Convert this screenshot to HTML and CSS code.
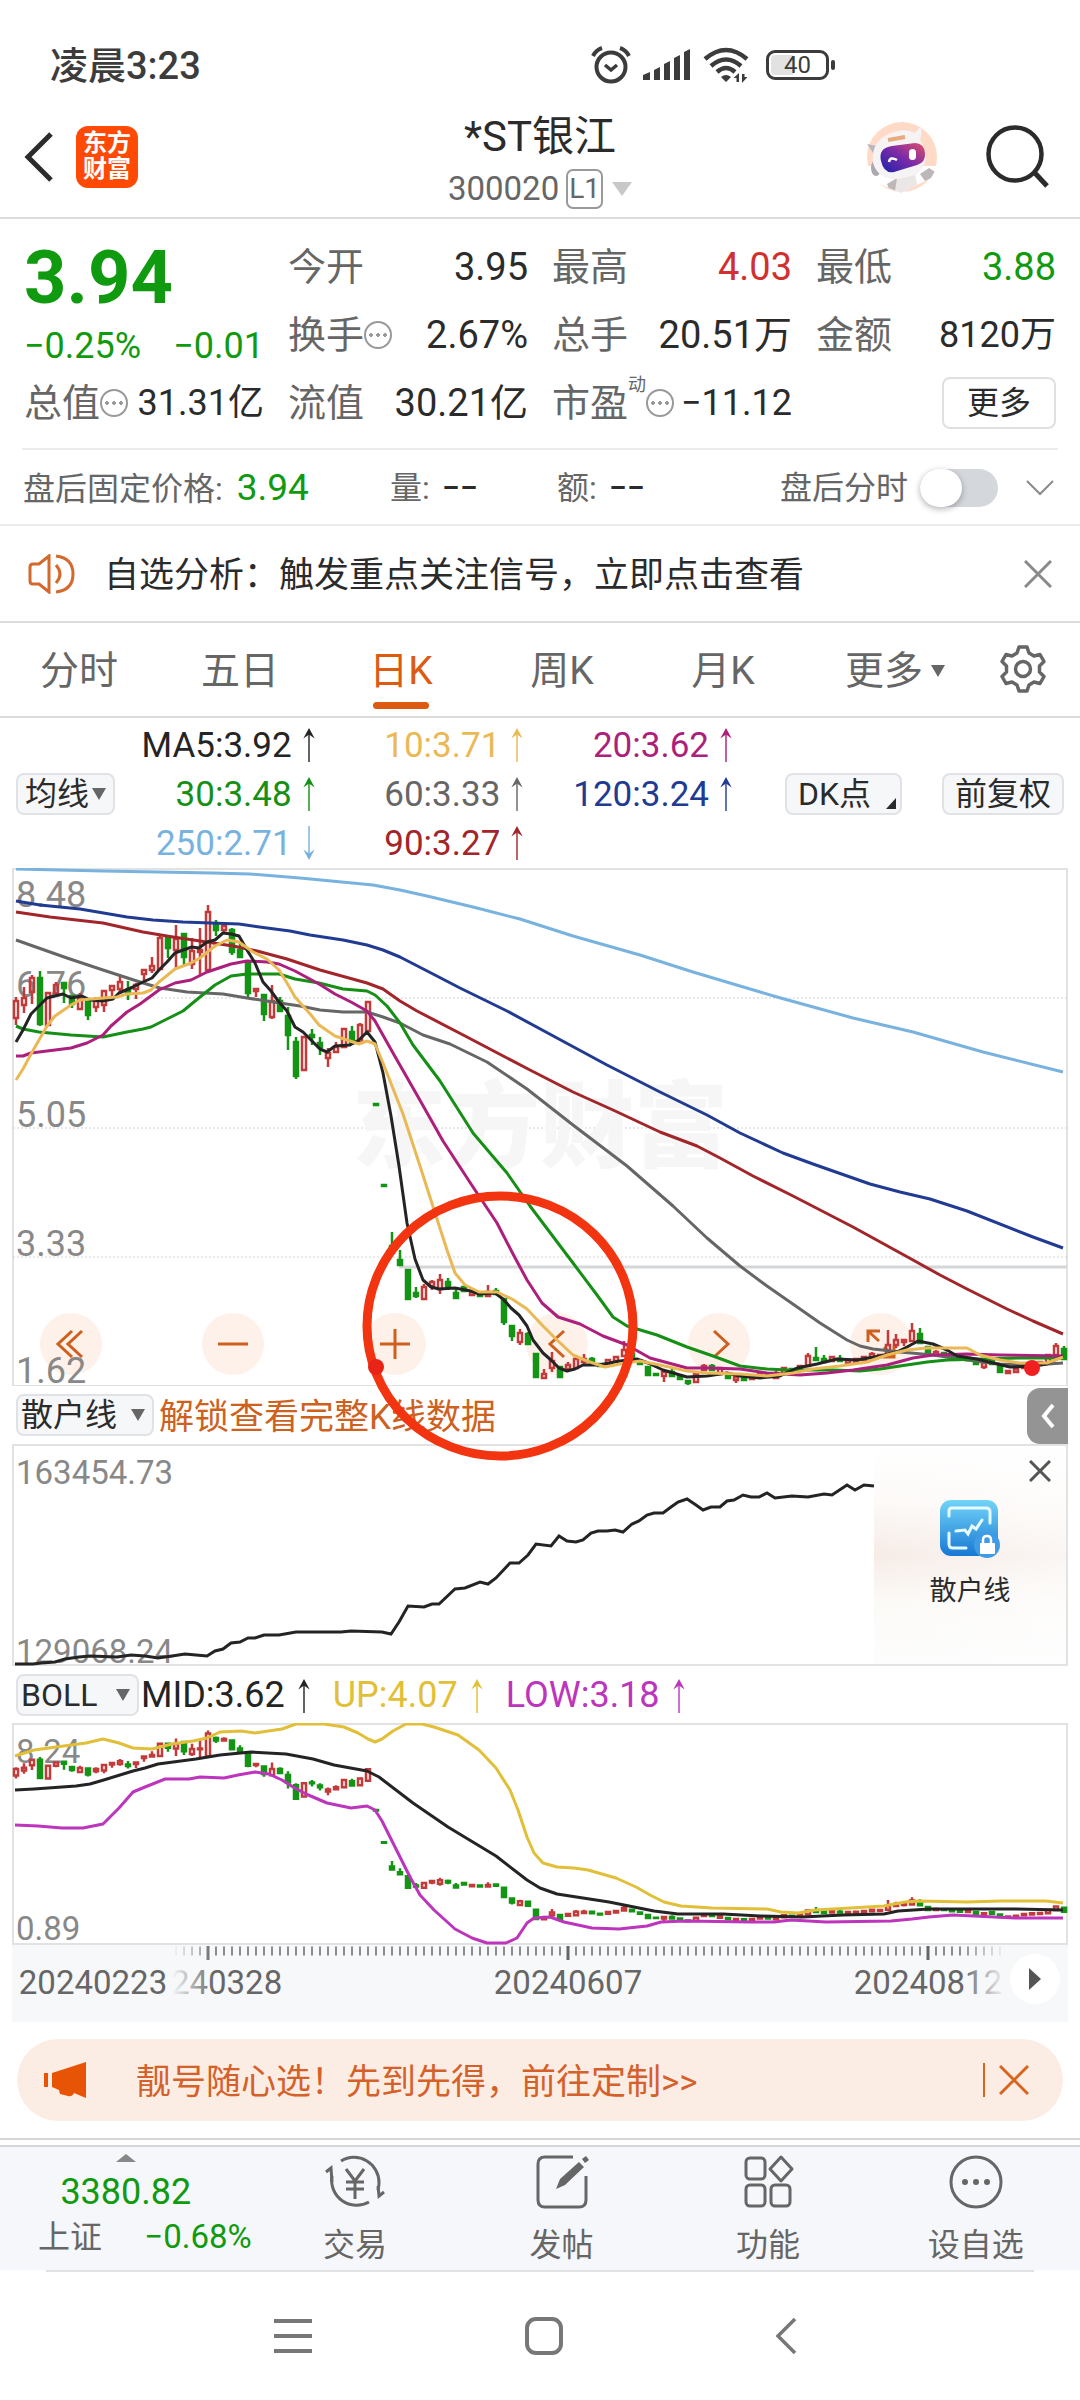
FILE: index.html
```html
<!DOCTYPE html>
<html lang="zh-CN">
<head>
<meta charset="utf-8">
<meta name="viewport" content="width=device-width, initial-scale=1">
<title>*ST银江 300020</title>
<link rel="stylesheet" href="styles.css">
</head>
<body>
<div class="status">
  <span class="status-time">凌晨3:23</span>
  <div class="status-icons">
    <svg width="40" height="38" viewBox="0 0 40 38" fill="none" stroke="#3c3c3c" stroke-width="4"><circle cx="20" cy="21" r="14.500"/><path d="M14 19l6 5 6-5" stroke-width="3.500"/><path d="M2 10q3-6 9-8M38 10q-3-6-9-8"/></svg>
    <svg width="48" height="32" viewBox="0 0 48 32" fill="#3c3c3c"><path d="M0 31v-5l7-3v8zM11 31V21l6-3v13zM21 31V15l6-3v19zM31 31V9l6-3v25zM41 31V3l6-3v31z"/></svg>
    <svg width="48" height="36" viewBox="0 0 48 36"><g fill="none" stroke="#3c3c3c" stroke-width="4.500"><path d="M2 12q21-18 42 0M8 19q15-13 30 0M14 25q9-8 18 0"/></g><path fill="#3c3c3c" d="M18 30q5-4 10 0l-5 5zM36 26v9h-2.500v-4h-3zM39 36v-9h2.500v3h3z"/></svg>
    <span class="battery">40</span>
  </div>
</div>

<header class="header">
  <div class="header-side">
    <button class="icon-btn" aria-label="返回"><svg width="30" height="50" viewBox="0 0 30 50" fill="none" stroke="#2b2b2b" stroke-width="5"><path d="M27 2L4 25l23 23"/></svg></button>
    <a class="logo" href="#">东方<br>财富</a>
  </div>
  <div class="header-mid">
    <h1>*ST银江</h1>
    <div class="code">300020<span class="level">L1</span><span class="tri tri-light"></span></div>
  </div>
  <div class="header-side header-right">
    <a class="icon-btn" href="#" aria-label="助手"><svg width="74" height="74" viewBox="0 0 74 74">
      <defs><linearGradient id="visor" x1="0" y1="1" x2="1" y2="0"><stop offset="0" stop-color="#1b22a8"/><stop offset=".5" stop-color="#7a2aa8"/><stop offset="1" stop-color="#e0506a"/></linearGradient><clipPath id="disc"><path d="M0 0h74v44l-8 14-30 15L10 62 0 44z"/></clipPath></defs>
      <circle cx="37" cy="37" r="35" fill="#ffdac6"/>
      <g clip-path="url(#disc)"><path d="M2 46h72v28H2z" fill="#fff"/><path d="M32 54h18l4 19H28z" fill="#ebe7e6"/><path d="M22 64l10-6-2 13-6-2zM55 54l9-6 8 5-3 6-9 2z" fill="#bdb7b8"/></g>
      <ellipse cx="11" cy="48" rx="5" ry="8" fill="#aaa8b0"/><path d="M2 24l10 2-2 10z" fill="#b9b8bf"/>
      <path d="M8 43Q5 17 33 11q10-2 17 2l6-7q1 8-1 14 13 20-3 34-36 14-44-11z" fill="#f5f3f4"/>
      <path d="M16 41q-3-13 11-15l23-3q9 0 10 10 1 9-8 12l-23 7q-10 2-13-11z" fill="url(#visor)"/>
      <path d="M24 42q1-6 8-2" stroke="#fff" stroke-width="2.500" fill="none"/><rect x="44" y="29" width="7" height="11" rx="3.500" fill="#fff"/><path d="M23 20l17-3" stroke="#e9a97c" stroke-width="4"/>
    </svg></a>
    <button class="icon-btn" aria-label="搜索"><svg width="64" height="64" viewBox="0 0 64 64" fill="none" stroke="#2b2b2b" stroke-width="4.500"><circle cx="30" cy="29" r="26.500"/><path d="M49 47l13 14" stroke-width="5"/></svg></button>
  </div>
</header>

<section class="quote">
  <div class="price-cell">
    <div class="price">3.94</div>
    <div class="change"><span>−0.25%</span><span>−0.01</span></div>
  </div>
  <div class="cell"><span class="k">今开</span><span>3.95</span></div>
  <div class="cell"><span class="k">最高</span><span class="up">4.03</span></div>
  <div class="cell"><span class="k">最低</span><span class="down">3.88</span></div>
  <div class="cell"><span class="k">换手<i class="more"></i></span><span>2.67%</span></div>
  <div class="cell"><span class="k">总手</span><span>20.51万</span></div>
  <div class="cell"><span class="k">金额</span><span class="long">8120万</span></div>
  <div class="cell"><span class="k">总值<i class="more"></i></span><span class="long">31.31亿</span></div>
  <div class="cell"><span class="k">流值</span><span>30.21亿</span></div>
  <div class="cell"><span class="k">市盈<small>动</small><i class="more"></i></span><span class="long">−11.12</span></div>
  <div class="cell cell-end"><button class="more-btn">更多</button></div>
</section>

<section class="after">
  <div class="after-price">盘后固定价格: <b>3.94</b></div>
  <div class="after-vol">量: <span class="dash">−−</span></div>
  <div class="after-amt">额: <span class="dash">−−</span></div>
  <label class="after-switch">盘后分时<input type="checkbox" class="switch"></label>
  <button class="icon-btn" aria-label="展开"><svg width="28" height="16" viewBox="0 0 28 16" fill="none" stroke="#8a8a8a" stroke-width="2"><path d="M1 1l13 13L27 1"/></svg></button>
</section>

<section class="notice">
  <svg width="48" height="40" viewBox="0 0 48 40" fill="none" stroke="#d4692e" stroke-width="3"><path d="M21 2L11 10H5q-3 0-3 3v14q0 3 3 3h6l10 8z"/><path d="M28 11q8 9 0 18M28 2q17 2 17 18T28 38"/></svg>
  <a href="#">自选分析：触发重点关注信号，立即点击查看</a>
  <button class="icon-btn" aria-label="关闭"><svg width="28" height="28" viewBox="0 0 28 28" fill="none" stroke="#8a8a8a" stroke-width="3"><path d="M1 1l26 26M27 1L1 27"/></svg></button>
</section>

<nav class="tabs">
  <button>分时</button><button>五日</button><button class="on">日K</button><button>周K</button><button>月K</button>
  <button class="tab-more">更多<span class="tri tri-small"></span></button>
  <button class="tab-gear" aria-label="设置"><svg width="48" height="48" viewBox="0 0 48 48" fill="none" stroke="#666" stroke-width="3.500" stroke-linejoin="round"><path d="M20 2h8l2 6 5 3 6-1.500 4 7-4.500 4.500v6l4.500 4.500-4 7-6-1.500-5 3-2 6h-8l-2-6-5-3-6 1.500-4-7L7.500 27v-6L3 16.500l4-7L13 11l5-3z"/><circle cx="24" cy="24" r="7.500"/></svg></button>
</nav>

<section class="ma">
  <div class="select-wrap ma-select"><select aria-label="指标"><option>均线</option></select><span class="tri tri-small"></span></div>
  <div class="ma-grid">
    <span class="c5">MA5:3.92<svg class="arw"><use href="#arrow"/></svg></span><span class="c10">10:3.71<svg class="arw"><use href="#arrow"/></svg></span><span class="c20">20:3.62<svg class="arw"><use href="#arrow"/></svg></span>
    <span class="c30">30:3.48<svg class="arw"><use href="#arrow"/></svg></span><span class="c60">60:3.33<svg class="arw"><use href="#arrow"/></svg></span><span class="c120">120:3.24<svg class="arw"><use href="#arrow"/></svg></span>
    <span class="c250">250:2.71<svg class="arw flip"><use href="#arrow"/></svg></span><span class="c90">90:3.27<svg class="arw"><use href="#arrow"/></svg></span>
  </div>
  <button class="chip chip-dk">DK点<i class="corner"></i></button>
  <button class="chip">前复权</button>
</section>
<svg class="defs" width="0" height="0"><symbol id="arrow" viewBox="0 0 14 36"><path d="M7 36V2" stroke="currentColor" stroke-width="1.500" fill="none"/><path d="M7 0l6 11-6-4-6 4z" fill="currentColor"/></symbol></svg>

<main class="charts">
  <div class="kline">
    <svg class="plot" viewBox="0 0 1056 518" role="img" aria-label="日K线图">
      <rect x="1" y="1" width="1054" height="517" class="frame"/>
      <path d="M1 130H1055M1 260H1055M1 389H1055" class="grid"/>
      <text x="528" y="292" class="watermark">东方财富</text>
      <path d="M387 399H1055" stroke="#d4d6d8" stroke-width="3"/>
      <g class="axis axis-big"><text x="4" y="39">8.48</text><text x="4" y="129">6.76</text><text x="4" y="259">5.05</text><text x="4" y="388">3.33</text><text x="4" y="515">1.62</text></g>
      <g id="k-main"></g>
      <g class="line">
        <polyline class="c250" points="4,1 91,3 201,5 238,6 288,10 361,17 388,22 415,28 461,39 508,51 561,68 628,87 681,104 728,118 765,129 841,150 901,164 971,184 1051,204"/>
        <polyline class="c120" points="4,33 28,37 68,41 115,49 141,52 171,54 227,56 255,60 278,63 298,67 331,72 355,77 371,82 388,89 421,106 448,120 495,143 545,170 595,197 648,224 695,247 728,265 771,285 801,296 858,316 888,324 918,331 955,343 1021,369 1051,380"/>
        <polyline class="c90" points="4,44 38,49 91,55 131,64 161,69 188,73 221,78 245,83 275,91 308,102 355,115 371,121 388,133 405,143 455,169 495,190 518,202 561,224 601,242 648,264 685,278 708,290 741,308 781,328 841,359 901,392 928,407 955,421 995,441 1021,453 1051,466"/>
        <polyline class="c60" points="4,72 55,90 91,102 131,115 148,120 175,124 211,126 235,130 261,134 288,138 308,142 331,144 355,144 371,149 388,155 411,167 438,176 475,194 515,221 561,257 615,298 661,338 695,370 728,398 755,418 788,441 808,455 835,472 848,478 861,481 888,484 921,487 955,492 988,496 1021,497 1051,495"/>
        <polyline class="c30" points="4,158 11,161 27,164 59,167 91,169 115,164 131,161 139,159 155,151 171,143 188,129 203,117 219,108 235,106 267,106 283,111 307,115 331,121 355,123 363,127 375,138 388,155 401,177 428,213 461,265 495,305 518,338 561,395 585,427 601,449 615,458 645,467 675,479 701,488 728,498 755,501 775,502 821,502 848,503 868,501 888,498 915,494 935,492 971,491 1008,490 1051,490"/>
        <polyline class="c20" points="4,188 11,188 19,185 43,182 59,180 75,175 91,167 99,158 115,144 128,136 147,122 163,115 179,112 195,104 219,96 235,93 255,94 267,96 283,103 307,116 323,126 339,134 355,143 363,153 381,185 405,227 431,273 461,319 485,355 501,386 515,412 530,435 546,449 568,456 591,468 615,477 638,490 675,500 698,500 728,501 755,505 788,507 815,505 841,502 875,497 901,490 921,487 955,486 988,487 1051,488"/>
        <polyline class="c5" points="4,174 11,162 19,146 27,138 35,130 51,126 59,130 70,128 78,132 91,133 101,131 107,125 121,119 131,114 140,110 147,102 155,94 163,85 171,82 180,79 187,80 195,74 203,72 211,65 219,66 227,68 235,82 243,95 251,114 259,123 267,134 275,143 283,159 291,164 299,172 308,181 315,184 323,178 338,177 347,172 355,164 363,174 371,205 379,248 387,298 395,355 403,391 411,412 419,419 427,421 443,420 459,423 467,426 483,425 491,431 499,440 507,447 515,458 521,472 531,485 539,492 547,500 555,503 563,501 571,497 587,497 608,493 625,491 636,495 651,502 675,509 695,508 715,505 728,508 748,510 768,508 785,500 805,496 825,491 845,492 868,488 885,484 895,479 906,473 921,476 935,482 945,488 965,491 981,495 998,499 1021,498 1035,496 1051,488"/>
        <polyline class="c10" points="4,212 11,201 19,186 27,172 35,158 43,148 59,137 68,132 91,130 105,129 115,126 131,125 139,122 147,114 163,101 179,95 188,90 203,78 215,72 227,74 241,84 255,91 267,102 275,115 283,129 299,147 307,157 323,168 347,176 355,173 363,176 371,195 391,246 408,298 425,351 435,382 443,405 453,417 467,424 485,424 500,431 515,441 531,458 545,472 561,487 575,493 593,499 608,496 628,493 648,497 675,503 695,505 728,506 755,508 781,505 801,501 828,498 855,494 875,487 895,482 915,480 955,480 968,487 988,492 1008,495 1035,495 1051,489"/>
      </g>
    </svg>
    <div class="controls">
      <button aria-label="最左"><svg viewBox="0 0 62 62"><path d="M32 18L18 31l14 13M42 18L28 31l14 13"/></svg></button>
      <button aria-label="缩小"><svg viewBox="0 0 62 62"><path d="M16 31h30"/></svg></button>
      <button aria-label="放大"><svg viewBox="0 0 62 62"><path d="M16 31h30M31 16v30"/></svg></button>
      <button aria-label="左移"><svg viewBox="0 0 62 62"><path d="M38 18L24 31l14 13"/></svg></button>
      <button aria-label="右移"><svg viewBox="0 0 62 62"><path d="M26 18l14 13-14 13"/></svg></button>
      <button aria-label="全屏"><svg viewBox="0 0 62 62"><path d="M18 29V18h12M18 18l11 10M44 33v11H33M44 44L34 34"/></svg></button>
    </div>
    <svg class="marks" viewBox="0 0 1056 518"><ellipse cx="488" cy="458" rx="133" ry="130" fill="none" stroke="#f23410" stroke-width="9"/><circle cx="364" cy="499" r="8" fill="#e82418"/><circle cx="1020" cy="500" r="8" fill="#f02020"/></svg>
  </div>

  <div class="bar">
    <div class="select-wrap"><select class="sel-sanhu" aria-label="副图一"><option>散户线</option></select><span class="tri tri-small"></span></div>
    <a class="unlock" href="#">解锁查看完整K线数据</a>
    <button class="drawer" aria-label="展开侧栏"><svg width="14" height="26" viewBox="0 0 14 26" fill="none" stroke="#fff" stroke-width="4"><path d="M12 2L3 13l9 11"/></svg></button>
  </div>

  <div class="sub">
    <svg class="plot" viewBox="0 0 1056 222" role="img" aria-label="散户线走势">
      <rect x="1" y="1" width="1054" height="220" class="frame"/>
      <g class="axis"><text x="4" y="40">163454.73</text><text x="4" y="219">129068.24</text></g>
      <polyline class="trend" points="3,220 21,220 29,219 43,218 53,215 67,213 78,212 105,213 119,211 133,212 146,214 160,212 173,210 184,211 195,212 203,207 211,205 219,199 228,198 236,194 243,194 252,191 267,191 284,188 329,188 339,187 370,188 379,190 387,178 396,162 412,163 420,160 427,160 443,145 453,144 468,138 476,140 484,134 498,119 507,119 516,111 524,100 539,102 547,92 555,97 564,98 571,96 579,89 586,87 595,87 603,86 611,88 620,80 627,77 635,71 642,69 651,69 659,63 666,58 675,55 684,61 691,66 699,63 708,63 715,57 722,56 731,51 739,53 747,53 755,49 763,54 780,52 796,53 812,50 820,51 835,41 843,46 852,41 862,42"/>
    </svg>
    <aside class="promo">
      <button class="icon-btn promo-close" aria-label="关闭"><svg width="22" height="22" viewBox="0 0 22 22" fill="none" stroke="#555" stroke-width="3"><path d="M1 1l20 20M21 1L1 21"/></svg></button>
      <a href="#"><svg width="62" height="60" viewBox="0 0 62 60" fill="none"><defs><linearGradient id="tile" x1="0" y1="0" x2="0" y2="1"><stop offset="0" stop-color="#72d4f8"/><stop offset="1" stop-color="#1878d4"/></linearGradient></defs><rect x="1" y="1" width="58" height="56" rx="11" fill="url(#tile)"/><g stroke="#e6faff" stroke-width="3" stroke-linecap="round"><path d="M10 17v-5q0-3 3-3h34q4 0 4 4v11M10 34v11q0 4 4 4h13"/><path d="M17 32l9-1 3 4 4-8 4 3 6-9"/></g><circle cx="48" cy="46" r="13" fill="#3f9be6"/><rect x="41" y="44" width="15" height="11" rx="1" fill="#fff"/><path d="M44 44v-3q0-4 4-4t4 4v3" stroke="#fff" stroke-width="2.500"/></svg><span>散户线</span></a>
    </aside>
  </div>

  <div class="bar bar-boll">
    <div class="select-wrap"><select class="sel-boll" aria-label="副图二"><option>BOLL</option></select><span class="tri tri-small"></span></div>
    <span class="boll c5">MID:3.62<svg class="arw"><use href="#arrow"/></svg></span><span class="boll cup">UP:4.07<svg class="arw"><use href="#arrow"/></svg></span><span class="boll clow">LOW:3.18<svg class="arw"><use href="#arrow"/></svg></span>
  </div>

  <svg class="plot" viewBox="0 0 1056 222" role="img" aria-label="BOLL">
    <rect x="1" y="1" width="1054" height="220" class="frame"/>
    <g class="axis"><text x="4" y="40">8.24</text><text x="4" y="217">0.89</text></g>
    <g id="k-boll"></g>
    <g class="line">
      <polyline class="cup" points="3,33 22,27 74,20 91,16 107,20 121,25 140,26 160,21 181,18 195,15 208,9 229,8 243,10 270,6 284,1 312,1 332,4 346,10 356,16 363,19 370,16 381,8 394,1 410,1 422,4 446,12 467,27 484,45 498,67 506,87 515,114 522,130 531,140 545,144 562,145 576,147 590,151 604,155 624,164 638,172 652,179 669,183 700,185 755,186 769,189 786,190 803,187 838,185 872,183 893,179 907,178 955,179 989,178 1034,178 1051,180"/>
      <polyline class="c5" points="3,67 22,66 64,63 78,61 95,56 121,48 133,45 146,41 184,36 208,32 239,29 274,31 301,36 322,42 355,48 367,54 401,80 436,104 484,133 515,157 528,165 545,171 597,179 642,188 666,191 711,191 748,193 790,194 831,192 872,191 886,188 917,186 1003,186 1051,187"/>
      <polyline class="clow" points="3,102 26,103 50,105 71,105 91,101 107,85 121,69 133,64 153,56 177,56 188,54 212,55 226,52 243,49 257,51 270,57 281,64 294,71 315,80 339,85 355,83 363,87 370,98 381,120 398,154 408,172 422,187 443,206 460,215 475,220 494,220 505,215 515,200 522,195 538,194 552,199 580,205 607,206 635,203 649,199 673,198 738,199 762,199 779,197 814,199 879,198 900,196 917,194 941,192 962,193 1003,195 1051,195"/>
    </g>
  </svg>

  <div class="ruler">
    <svg class="plot" viewBox="0 0 1056 77">
      <defs><linearGradient id="fade-l"><stop offset="0" stop-color="#f7f8fa"/><stop offset="1" stop-color="#f7f8fa" stop-opacity="0"/></linearGradient><linearGradient id="fade-r"><stop offset="0" stop-color="#f7f8fa" stop-opacity="0"/><stop offset="1" stop-color="#f7f8fa"/></linearGradient></defs>
      <path d="M163 6H1000" stroke="#8c8c8c" stroke-width="9" stroke-dasharray="2 6"/>
      <path d="M196 1v14M556 1v14M916 1v14" stroke="#666" stroke-width="3"/>
      <g class="dates"><text x="196" y="49">20240328</text><text x="556" y="49">20240607</text><text x="916" y="49">20240812</text></g>
      <path d="M2 0h158v77H2zM994 0h61v77h-61z" fill="#f7f8fa"/><path d="M160 0h42v77h-42z" fill="url(#fade-l)"/><path d="M950 0h44v77h-44z" fill="url(#fade-r)"/>
      <g class="dates"><text x="81" y="49">20240223</text></g>
    </svg>
    <button class="play" aria-label="播放"><svg width="14" height="22" viewBox="0 0 14 22"><path d="M1 0l12 11L1 22z" fill="#555"/></svg></button>
  </div>
</main>

<div class="banner">
  <svg width="44" height="38" viewBox="0 0 44 38" fill="#e85406"><path d="M0 12h4v14H0zM8 12L42 1v36L30 32q-2 4-6 3l-8-2-1-4-7-3z"/></svg>
  <a href="#">靓号随心选！先到先得，前往定制&gt;&gt;</a>
  <button class="icon-btn banner-close" aria-label="关闭"><svg width="30" height="30" viewBox="0 0 30 30" fill="none" stroke="#d9641e" stroke-width="3"><path d="M1 1l28 28M29 1L1 29"/></svg></button>
</div>

<nav class="bottom">
  <a class="index" href="#"><span class="tri tri-up"></span><span class="index-val">3380.82</span><span class="index-row"><span>上证</span><span class="down">−0.68%</span></span></a>
  <a class="item" href="#"><svg viewBox="0 0 60 56"><path d="M16 7a25 25 0 0 1 38 22q0 3-1 7M44 48A25 25 0 0 1 7 22"/><path d="M1 18l5-4 1 14M59 38l-5 4-1-10" /><path d="M21 15l9 12 9-12M30 27v18M21 28h18M21 35h18"/></svg>交易</a>
  <a class="item" href="#"><svg viewBox="0 0 60 56"><path d="M41 3H13q-7 0-7 7v36q0 7 7 7h34q7 0 7-7V22"/><path d="M24 35l4-10L47 8l5 5-19 18zM50 5l4-3 3 4-4 3z" fill="#666" stroke="none"/></svg>发帖</a>
  <a class="item" href="#"><svg viewBox="0 0 60 56"><rect x="8" y="4" width="19" height="21" rx="4"/><rect x="8" y="31" width="19" height="21" rx="4"/><rect x="33" y="31" width="19" height="21" rx="4"/><path d="M43 3l11 12-11 12-11-12z" stroke-linejoin="round"/></svg>功能</a>
  <a class="item" href="#"><svg viewBox="0 0 60 56"><circle cx="30" cy="28" r="25"/><g fill="#666" stroke="none"><circle cx="19" cy="28" r="3"/><circle cx="30" cy="28" r="3"/><circle cx="41" cy="28" r="3"/></g></svg>设自选</a>
</nav>

<div class="sysnav">
  <button class="icon-btn" aria-label="菜单"><svg width="38" height="34" viewBox="0 0 38 34" stroke="#777" stroke-width="4"><path d="M0 2h38M0 17h38M0 32h38"/></svg></button>
  <button class="icon-btn" aria-label="主页"><svg width="38" height="38" viewBox="0 0 38 38" fill="none" stroke="#777" stroke-width="4"><rect x="2" y="2" width="34" height="34" rx="9"/></svg></button>
  <button class="icon-btn" aria-label="返回"><svg width="28" height="36" viewBox="0 0 28 36" fill="none" stroke="#777" stroke-width="3.500"><path d="M19 1L2 18l17 17"/></svg></button>
</div>
<script src="script.js"></script>
</body>
</html>
```
FILE: styles.css
```css
* { box-sizing: border-box; }
body { margin: 0; background: #fff; color: #2b2b2b; font-family: Roboto, "Noto Sans CJK SC", sans-serif; font-size: 34px; line-height: 1.2; }
button, select { font: inherit; color: inherit; background: none; border: 0; padding: 0; margin: 0; }
a { color: inherit; text-decoration: none; }
svg { display: block; flex: none; }
.icon-btn { display: flex; align-items: center; justify-content: center; }
.defs { position: absolute; }
.up { color: #d03030; }
.down { color: #0f9a0f; }

.tri { display: inline-block; border: 10px solid transparent; border-top: 14px solid #c8c8c8; border-bottom: 0; }
.tri-small { border-width: 12px 7px 0; border-top-color: #666; }
.tri-up { border-width: 0 10px 8px; border-bottom: 8px solid #888; }

.status { display: flex; align-items: center; justify-content: space-between; height: 108px; padding: 22px 245px 0 50px; }
.status-time { padding-top: 4px; font-size: 38px; font-weight: 500; color: #3c3c3c; }
.status-icons { display: flex; align-items: center; gap: 12px; }
.battery { position: relative; width: 63px; height: 30px; margin: 0 6px 0 3px; padding: 2px; border: 3px solid #3c3c3c; border-radius: 9px; font-size: 24px; line-height: 21px; text-align: center; color: #3c3c3c; background: linear-gradient(90deg, #e2e2e2 22px, #fff 22px) content-box; }
.battery::after { content: ""; position: absolute; right: -9px; top: 7px; width: 4px; height: 10px; border-radius: 2px; background: #3c3c3c; }

.header { display: grid; grid-template-columns: 1fr auto 1fr; height: 111px; border-bottom: 2px solid #dcdcdc; }
.header-side { display: flex; align-items: center; gap: 22px; padding: 0 0 12px 24px; }
.header-right { justify-content: flex-end; gap: 46px; padding: 0 31px 12px 0; }
.logo { width: 62px; height: 62px; border-radius: 12px; background: #ff4a06; color: #fff; font-size: 24px; line-height: 26px; font-weight: 700; text-align: center; padding-top: 4px; }
.header-mid { text-align: center; padding-top: 4px; }
h1 { margin: 0; font-size: 42px; line-height: 50px; font-weight: 400; }
.code { display: flex; align-items: center; justify-content: center; margin-top: 7px; font-size: 33px; line-height: 38px; color: #666; }
.level { border: 2px solid #999; border-radius: 7px; padding: 0 1px; margin: 0 9px 0 7px; font-size: 28px; line-height: 36px; }

.quote { display: grid; grid-template-columns: repeat(4, 1fr); grid-auto-rows: 68px; column-gap: 24px; margin: 0 22px; padding: 14px 2px 11px; border-bottom: 2px solid #ececec; font-size: 38px; line-height: 68px; }
.price-cell { grid-row: span 2; color: #0f9a0f; }
.price { font-size: 74px; line-height: 90px; font-weight: 700; }
.change { display: flex; justify-content: space-between; font-size: 36px; line-height: 46px; }
.cell { display: flex; justify-content: space-between; white-space: nowrap; }
.long { font-size: 36px; }
.k { display: flex; align-items: center; color: #666; }
.k small { align-self: flex-start; font-size: 18px; line-height: 32px; }
.more { width: 28px; height: 28px; border: 2px solid #999; border-radius: 50%; background: radial-gradient(circle, #999 2px, transparent 2px), radial-gradient(circle at 5px 12px, #999 2px, transparent 2px), radial-gradient(circle at 19px 12px, #999 2px, transparent 2px); }
.cell-end { justify-content: flex-end; align-items: center; }
.more-btn { width: 114px; height: 52px; border: 2px solid #e0e0e0; border-radius: 8px; font-size: 32px; line-height: 48px; }

.after { display: flex; align-items: center; height: 76px; padding: 2px 26px 0 23px; border-bottom: 2px solid #ececec; font-size: 32px; color: #666; }
.after b { padding-left: 6px; font-size: 37px; font-weight: 400; color: #0f9a0f; }
.after-price { flex: 367; white-space: nowrap; }
.after-vol { flex: 167; white-space: nowrap; }
.after-amt { flex: 223; white-space: nowrap; }
.dash { color: #2b2b2b; padding-left: 4px; font-weight: 500; }
.after-switch { display: flex; align-items: center; gap: 12px; margin-right: 28px; }
.switch { appearance: none; width: 78px; height: 38px; margin: 0; border-radius: 19px; background: #d4d8dd; }
.switch::before { content: ""; display: block; width: 42px; height: 38px; border-radius: 20px; background: #fff; box-shadow: 0 2px 6px rgba(0, 0, 0, .3); }

.notice { display: flex; align-items: center; height: 97px; padding: 0 28px; border-bottom: 2px solid #dcdcdc; font-size: 35px; }
.notice a { flex: 1; padding: 5px 0 0 28px; }

.tabs { display: grid; grid-template-columns: repeat(5, 161fr) 165fr 110fr; height: 95px; border-bottom: 2px solid #dcdcdc; font-size: 39px; color: #666; }
.tabs button { position: relative; display: flex; align-items: center; justify-content: center; padding: 3px 3px 0 0; }
.tabs .on { color: #dd5a12; }
.tabs .on::after { content: ""; position: absolute; bottom: 7px; width: 56px; height: 7px; border-radius: 4px; background: #dd5a12; }
.tabs .tab-more { gap: 8px; padding-left: 18px; }
.tabs .tab-gear { padding: 0 4px 2px 0; }

.ma { display: flex; align-items: center; height: 150px; padding: 2px 16px 0; }
.select-wrap { display: flex; align-items: center; position: relative; }
.select-wrap .tri { position: absolute; right: 9px; pointer-events: none; }
select, .chip { appearance: none; height: 42px; border: 2px solid #e0e2e6; border-radius: 8px; background: #f6f7f9; font-size: 32px; line-height: 36px; }
.ma-select select { width: 99px; padding-left: 7px; }
.ma-grid { flex: 1; display: grid; grid-template-columns: 201fr 209fr 209fr; grid-auto-rows: 49px; margin-right: 52px; font-size: 35px; line-height: 49px; }
.ma-grid span { display: flex; justify-content: flex-end; align-items: center; }
.ma-grid .arw { margin-left: 10px; }
.arw { width: 14px; height: 34px; }
.flip { transform: rotate(180deg); }
.chip { position: relative; padding: 0 11px; margin-left: 40px; }
.chip-dk { width: 117px; margin-left: 0; text-align: left; }
.corner { position: absolute; right: 4px; bottom: 4px; border-left: 10px solid transparent; border-bottom: 11px solid #2b2b2b; }

.c5 { color: #242424; } .c10 { color: #eab955; } .c20 { color: #ac1f7c; } .c30 { color: #158f15; } .c60 { color: #666; }
.c120 { color: #213a92; } .c250 { color: #78b2de; } .c90 { color: #a2252a; } .cup { color: #e2bf38; } .clow { color: #bc35bc; }

.charts { padding: 0 12px; }
.plot { width: 100%; height: auto; }
.frame { fill: none; stroke: #e2e2e2; stroke-width: 2; }
.grid { stroke: #d2d2d2; stroke-width: 1; stroke-dasharray: 2 2; }
.watermark { font-size: 94px; font-weight: 900; fill: #f6f6f6; text-anchor: middle; }
.axis { font-size: 33px; fill: #888; }
.axis-big { font-size: 36px; }
.line polyline { fill: none; stroke: currentColor; stroke-width: 3; stroke-linejoin: round; }
.trend { fill: none; stroke: #242424; stroke-width: 3; }
.k-up { fill: none; stroke: #c23a3a; stroke-width: 2.5; }
.k-down { fill: #149414; stroke: #149414; stroke-width: 2.5; }

.kline, .sub, .ruler { position: relative; }
.kline .plot { position: relative; z-index: 1; pointer-events: none; }
.controls { position: absolute; left: 28px; right: 156px; bottom: 11px; display: flex; justify-content: space-between; }
.controls button { width: 62px; height: 62px; border-radius: 50%; background: #fef1ea; }
.controls path { fill: none; stroke: #cf5f1c; stroke-width: 3; }
.marks { position: absolute; left: 0; top: 0; width: 100%; overflow: visible; z-index: 2; pointer-events: none; }

.bar { display: flex; align-items: center; height: 58px; padding-left: 4px; }
.sel-sanhu { width: 138px; padding-left: 3px; }
.sel-boll { width: 123px; padding-left: 3px; }
.unlock { flex: 1; padding: 5px 0 0 5px; font-size: 35px; color: #cd621f; }
.drawer { align-self: stretch; width: 41px; margin-top: 2px; border-radius: 13px 0 0 13px; background: #949494; display: flex; align-items: center; justify-content: center; }
.bar-boll { height: 57px; }
.boll { display: flex; align-items: center; padding: 3px 20px 0 2px; font-size: 36px; }
.boll .arw { margin-left: 12px; }

.promo { position: absolute; right: 2px; top: 2px; bottom: 2px; width: 192px; background: linear-gradient(90deg, transparent, rgba(255, 255, 255, .5)), linear-gradient(#fff, #fdfaf8 25%, #f6ece7 50%, #fcfaf7 72%, #fdfdfd); }
.promo a { display: flex; flex-direction: column; align-items: center; gap: 14px; padding-top: 53px; font-size: 27px; line-height: 36px; }
.promo-close { position: absolute; right: 15px; top: 14px; }

.ruler { background: #f7f8fa; }
.dates { font-size: 33px; fill: #666; text-anchor: middle; }
.play { position: absolute; right: 8px; top: 9px; width: 50px; height: 50px; border-radius: 50%; background: #fff; display: flex; align-items: center; justify-content: center; }

.banner { display: flex; align-items: center; height: 82px; margin: 17px; padding: 0 34px 0 27px; border-radius: 41px; background: #fcede4; color: #d4602a; font-size: 35px; }
.banner a { flex: 1; padding: 5px 0 0 48px; }
.banner-close { height: 34px; padding-left: 14px; border-left: 2px solid #d9641e; }

.bottom { display: grid; grid-template-columns: 251fr 206fr 206fr 206fr 208fr; height: 132px; border-top: 2px solid #d4d6d8; background: linear-gradient(#fff 5px, #d4d6d8 5px, #d4d6d8 7px, #f6f7fa 7px); padding-top: 5px; font-size: 32px; color: #666; }
.index { display: flex; flex-direction: column; align-items: center; padding-top: 9px; }
.index-val { font-size: 36px; line-height: 46px; margin-top: 7px; color: #0f9a0f; }
.index-row { align-self: stretch; display: flex; justify-content: space-between; padding: 0 0 0 38px; line-height: 44px; }
.index-row .down { font-size: 33px; }
.item { display: flex; flex-direction: column; align-items: center; gap: 15px; padding-top: 9px; line-height: 40px; }
.item svg { width: 60px; height: 56px; fill: none; stroke: #666; stroke-width: 3; }

.sysnav { display: flex; justify-content: space-between; align-items: center; height: 130px; margin: 0 46px; padding: 0 230px 0 228px; border-top: 2px solid #e2e2e2; }
```
FILE: script.js
```js
// Each entry: direction (r = up day, g = down day), then high, body top, body bottom, low in main-chart units.
const days = `r129,133,150,157 r119,130,137,145 r107,110,124,136 g103,110,156,158 r125,125,157,157 r114,117,125,129
g114,115,120,135 g127,128,136,140 r125,131,141,141 g132,132,147,152 r129,133,139,144 r123,123,137,144
r117,118,122,130 r108,114,121,125 g113,122,126,132 r115,117,121,131 r101,102,106,115 r89,98,102,105
r68,70,101,102 g69,70,80,90 r57,71,82,101 g65,66,89,98 r70,83,96,101 r60,82,84,108
r37,44,102,104 g52,56,62,68 r54,58,62,65 g60,62,84,87 g74,82,89,90 g94,94,125,129
r120,121,123,129 g127,127,146,153 r117,133,149,151 g129,133,143,143 g139,148,167,182 g169,174,208,211
r169,169,202,202 g161,167,169,177 g169,175,179,187 r180,185,190,199 r174,179,184,185 r161,161,179,179
g158,164,175,177 r155,157,174,174 r134,134,163,163 g236,236,237,237 g317,317,318,318 g364,378,385,385
g382,392,397,398 g402,402,431,432 g419,425,428,430 r416,419,431,431 r412,414,418,422 r406,412,421,426
g410,414,418,422 g419,425,430,431 g418,419,423,423 r422,424,427,428 g425,425,428,428 r417,424,428,429
g420,423,426,427 g431,431,454,457 g457,458,468,473 r461,465,474,477 g464,466,476,476 g485,486,509,509
r501,506,510,510 r484,493,500,504 g498,499,509,509 r494,497,501,501 r487,491,500,500 r486,491,494,496
g489,491,495,495 g496,496,498,498 r492,492,496,496 r488,489,493,493 r473,482,488,488 g485,486,490,490
g493,493,496,496 g498,499,507,508 g505,506,507,507 r504,504,508,514 g500,504,508,508 g508,508,511,511
g513,513,515,517 r506,506,514,514 r496,498,502,502 g496,498,502,502 r500,500,506,506 g507,507,510,510
r508,509,512,515 g510,510,512,512 r509,509,511,511 r506,506,508,508 g506,507,508,508 r503,505,510,510
r499,500,505,505 g501,501,503,503 r498,498,501,501 r485,488,498,498 g479,490,492,492 g487,491,494,494
r489,489,493,493 g487,491,493,493 r492,492,495,495 r491,491,494,494 r488,489,492,492 r484,486,490,490
r487,487,489,489 r462,477,486,486 r466,472,477,480 r471,472,474,478 r455,463,473,473 g460,466,475,475
g478,479,487,487 r482,484,487,487 g485,485,487,487 g487,487,490,490 g488,488,491,491 r490,490,492,492
g492,492,496,496 r495,495,499,501 g492,492,496,496 g498,498,504,504 r502,503,505,505 r501,501,504,504
r497,497,500,500 r495,495,498,498 r494,494,497,497 r486,487,495,495 r475,478,487,487 g478,481,491,491`.split(/\s+/);

// The BOLL panel shows the same prices on its own vertical scale.
function drawCandles(id, toY) {
  const paths = { r: "", g: "" };
  days.forEach((day, i) => {
    const x = 4 + i * 8;
    const [high, top, bottom, low] = day.slice(1).split(",").map(v => toY(Number(v)).toFixed(1));
    paths[day[0]] += `M${x} ${high}V${top}M${x} ${bottom}V${low}M${x - 2} ${top}H${x + 2}V${bottom}H${x - 2}Z`;
  });
  document.getElementById(id).innerHTML =
    `<path class="k-up" d="${paths.r}"/><path class="k-down" d="${paths.g}"/>`;
}

drawCandles("k-main", y => y);
drawCandles("k-boll", y => y * 0.399 - 7.2);
```
